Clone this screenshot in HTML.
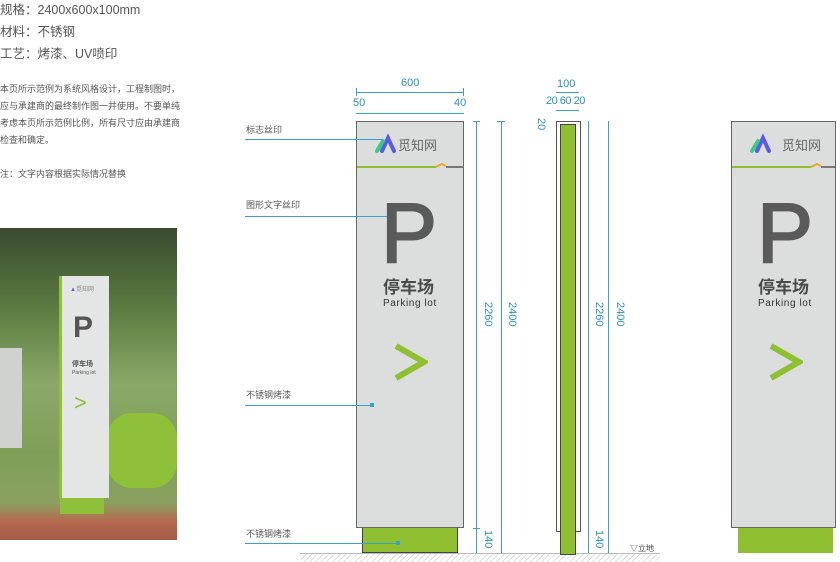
<html><head><style>
body{margin:0;width:840px;height:561px;background:#fff;position:relative;overflow:hidden;font-family:"Liberation Sans","Noto Sans CJK SC",sans-serif;color:#555}
.a{position:absolute;white-space:nowrap}
.t{font-size:12.5px;color:#555}
.s{font-size:9px;color:#555}
.bl{position:absolute;background:#3aa0c8}
.dim{position:absolute;color:#2b8fb8;font-size:11px}
.rot{transform:rotate(90deg);transform-origin:left top}
.P{font-size:84px;line-height:84px;color:#5a5a5a;font-family:"Liberation Sans",sans-serif;-webkit-text-stroke:2px #5a5a5a}
.cn{font-size:17px;line-height:17px;font-weight:bold;color:#4a4a4a}
.en{font-size:10px;line-height:10px;color:#333;letter-spacing:.6px}
</style></head><body>
<div class="a t" style="left:0;top:-1px">规格：2400x600x100mm</div>
<div class="a t" style="left:0;top:21px">材料：不锈钢</div>
<div class="a t" style="left:0;top:43px">工艺：烤漆、UV喷印</div>
<div class="a s" style="left:0;top:81px;line-height:17px">本页所示范例为系统风格设计，工程制图时，<br>应与承建商的最终制作图一并使用。不要单纯<br>考虑本页所示范例比例，所有尺寸应由承建商<br>检查和确定。</div>
<div class="a s" style="left:0;top:167px">注：文字内容根据实际情况替换</div>

<!-- photo -->
<div class="a" style="left:0;top:228px;width:177px;height:312px;background:linear-gradient(180deg,#3a4a30 0%,#5a7a40 25%,#8aa868 50%,#7f9f58 72%,#8aa060 88%,#b56a50 94%,#a85a48 100%)">
<div class="a" style="left:0;top:120px;width:22px;height:100px;background:#cfd3cf"></div>
<div class="a" style="left:107px;top:185px;width:70px;height:75px;background:#8ec03a;border-radius:25px"></div>
<div class="a" style="left:59px;top:48px;width:47px;height:222px;background:#e4e6e6;border-left:3px solid #8ec03a"></div>
<div class="a" style="left:60px;top:270px;width:44px;height:16px;background:#8ec03a"></div>
<div class="a" style="left:70px;top:56px;font-size:6px;color:#5b5bd6">▲<span style="color:#888">觅知网</span></div>
<div class="a" style="left:73px;top:83px;font-size:30px;color:#555;font-weight:bold">P</div>
<div class="a" style="left:72px;top:131px;font-size:7px;font-weight:bold;color:#555">停车场</div>
<div class="a" style="left:72px;top:142px;font-size:5px;color:#555">Parking lot</div>
<div class="a" style="left:74px;top:162px;font-size:22px;color:#8ec03a">&gt;</div>
</div>

<!-- ground -->
<div class="a" style="left:300px;top:553px;width:360px;height:8px;background:repeating-linear-gradient(135deg,#ddd 0 1px,#fff 1px 4px);border-top:1px solid #bbb"></div>

<!-- front sign -->
<div class="a" style="left:356px;top:121px;width:106px;height:405px;background:#dcdedd;border:1px solid #666"></div>
<div class="a" style="left:362px;top:528px;width:94px;height:24px;background:#8ec031;border:1px solid #444;border-top:none"></div>
<svg class="a" style="left:356px;top:130px" width="110" height="45"><path d="M26 21l6-13 6 13" stroke-linecap="round" stroke-width="4" fill="none" stroke="#5a5be0"/><path d="M21 21l6-10" stroke="#3cc889" stroke-width="4" stroke-linecap="round"/><path d="M1 37H80" fill="none" stroke="#8ec031" stroke-width="2"/><path d="M80 37l6-3 4 2" stroke="#f2a531" stroke-width="2" fill="none"/><path d="M90 37H108" stroke="#777" stroke-width="2"/></svg>
<div class="a" style="left:398px;top:135px;font-size:13px;color:#666">觅知网</div>
<div class="a P" style="left:381px;top:191px">P</div>
<div class="a cn" style="left:383px;top:279px">停车场</div>
<div class="a en" style="left:383px;top:299px">Parking lot</div>
<svg class="a" style="left:394px;top:343px" width="34" height="40"><path d="M2 3L30 19L2 35" fill="none" stroke="#8ec031" stroke-width="6"/></svg>

<!-- dims front -->
<div class="dim a" style="left:401px;top:77px">600</div>
<div class="bl" style="left:356px;top:92px;width:108px;height:1px"></div>
<div class="bl" style="left:356px;top:88px;width:1px;height:8px"></div><div class="bl" style="left:463px;top:88px;width:1px;height:8px"></div>
<div class="dim a" style="left:353px;top:97px">50</div><div class="dim a" style="left:454px;top:97px">40</div>
<div class="bl" style="left:356px;top:113px;width:108px;height:1px"></div>
<div class="bl" style="left:476px;top:121px;width:1px;height:432px"></div>
<div class="bl" style="left:473px;top:121px;width:7px;height:1px"></div><div class="bl" style="left:473px;top:528px;width:7px;height:1px"></div>
<div class="bl" style="left:501px;top:121px;width:1px;height:432px"></div>
<div class="bl" style="left:497px;top:121px;width:8px;height:1px"></div>
<div class="dim a rot" style="left:494px;top:302px">2260</div>
<div class="dim a rot" style="left:518px;top:302px">2400</div>
<div class="dim a rot" style="left:494px;top:530px">140</div>

<!-- labels -->
<div class="a s" style="left:246px;top:123px">标志丝印</div><div class="bl" style="left:245px;top:139px;width:138px;height:1px"></div>
<div class="a s" style="left:246px;top:198px">图形文字丝印</div><div class="bl" style="left:245px;top:216px;width:142px;height:1px"></div>
<div class="a s" style="left:246px;top:388px">不锈钢烤漆</div><div class="bl" style="left:245px;top:405px;width:126px;height:1px"></div><div class="bl" style="left:370px;top:403px;width:4px;height:4px"></div>
<div class="a s" style="left:246px;top:527px">不锈钢烤漆</div><div class="bl" style="left:245px;top:543px;width:152px;height:1px"></div><div class="bl" style="left:396px;top:541px;width:4px;height:4px"></div>

<!-- side view -->
<div class="a" style="left:556px;top:121px;width:23px;height:409px;background:#fff;border:1px solid #555"></div>
<div class="a" style="left:560px;top:124px;width:14px;height:429px;background:#8ec031;border:1px solid #444"></div>
<div class="dim a" style="left:557px;top:78px">100</div>
<div class="bl" style="left:556px;top:92px;width:23px;height:1px"></div>
<div class="dim a" style="left:546px;top:95px;letter-spacing:-.5px">20 60 20</div>
<div class="bl" style="left:556px;top:110px;width:23px;height:1px"></div>
<div class="dim a rot" style="left:547px;top:118px">20</div>
<div class="bl" style="left:588px;top:121px;width:1px;height:432px"></div>
<div class="bl" style="left:608px;top:121px;width:1px;height:432px"></div>
<div class="dim a rot" style="left:605px;top:302px">2260</div>
<div class="dim a rot" style="left:626px;top:302px">2400</div>
<div class="dim a rot" style="left:605px;top:530px">140</div>
<div class="a" style="left:630px;top:543px;font-size:8px;color:#444">▽立地</div>

<!-- right sign -->
<div class="a" style="left:731px;top:121px;width:103px;height:405px;background:#dcdedd;border:1px solid #666"></div>
<div class="a" style="left:738px;top:528px;width:95px;height:25px;background:#8ec031"></div>
<svg class="a" style="left:731px;top:130px" width="105" height="45"><path d="M26 21l6-13 6 13" stroke-linecap="round" stroke-width="4" fill="none" stroke="#5a5be0"/><path d="M21 21l6-10" stroke="#3cc889" stroke-width="4" stroke-linecap="round"/><path d="M1 37H80" fill="none" stroke="#8ec031" stroke-width="2"/><path d="M80 37l6-3 4 2" stroke="#f2a531" stroke-width="2" fill="none"/><path d="M90 37H104" stroke="#777" stroke-width="2"/></svg>
<div class="a" style="left:782px;top:135px;font-size:13px;color:#666">觅知网</div>
<div class="a P" style="left:757px;top:191px">P</div>
<div class="a cn" style="left:758px;top:279px">停车场</div>
<div class="a en" style="left:758px;top:299px">Parking lot</div>
<svg class="a" style="left:769px;top:343px" width="34" height="40"><path d="M2 3L30 19L2 35" fill="none" stroke="#8ec031" stroke-width="6"/></svg>
</body></html>
